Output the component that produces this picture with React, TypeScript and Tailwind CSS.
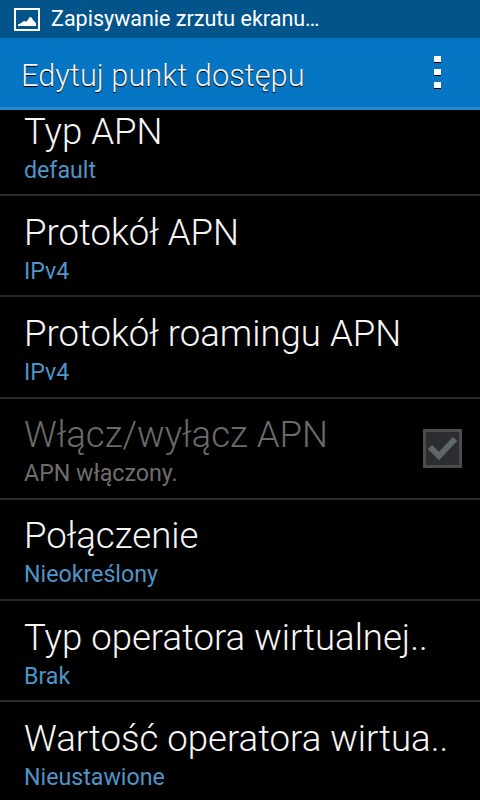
import React from 'react';

const rows = [
  { title: 'Protokół APN', sub: 'IPv4' },
  { title: 'Protokół roamingu APN', sub: 'IPv4' },
  { title: 'Włącz/wyłącz APN', sub: 'APN włączony.', disabled: true },
  { title: 'Połączenie', sub: 'Nieokreślony' },
  { title: 'Typ operatora wirtualnej..', sub: 'Brak' },
  { title: 'Wartość operatora wirtua..', sub: 'Nieustawione' },
];

const PictureIcon = () => (
  <svg width="26" height="23" viewBox="0 0 26 23" className="shrink-0">
    <rect x="1" y="1" width="24" height="21" fill="none" stroke="#fff" strokeWidth="2" />
    <path d="M4 18 L4 16.5 Q7 15.5 9 13.5 Q10.5 12.5 12 14 Q14 12 15.5 9.5 Q16.5 8.5 17.5 9.5 Q19.5 13 22 15 L22 18 Z" fill="#fff" />
  </svg>
);

const App: React.FC = () => {
  return (
    <div className="w-[480px] h-[800px] bg-black overflow-hidden flex flex-col font-['Roboto',sans-serif]">
      <div className="h-[38px] bg-[#04548c] flex items-center pl-[14px] gap-[11px] shrink-0">
        <PictureIcon />
        <span className="text-white text-[21.5px] leading-none">Zapisywanie zrzutu ekranu…</span>
      </div>
      <div className="h-[72px] bg-[#0676c4] border-b-[3px] border-[#2a86cc] flex items-center justify-between pl-[21px] pr-[39px] shrink-0">
        <span className="text-[#f4f4f4] text-[30.8px] font-light leading-none pt-[7px] [text-shadow:0_1px_1px_#000]">Edytuj punkt dostępu</span>
        <div className="flex flex-col gap-[6px]">
          <div className="w-[7px] h-[6px] bg-white border-b border-black box-content" />
          <div className="w-[7px] h-[6px] bg-white border-b border-black box-content" />
          <div className="w-[7px] h-[6px] bg-white border-b border-black box-content" />
        </div>
      </div>
      <div className="flex-1 overflow-hidden flex flex-col">
        <div className="h-[86px] shrink-0 border-b-2 border-[#2a2a2a] pl-[24px] flex flex-col justify-end pb-[10px]">
          <div className="text-[#f6f6f6] text-[36.6px] font-light leading-[40px]">Typ APN</div>
          <div className="text-[#4f94c8] text-[23.2px] leading-[28px] mt-[4px]">default</div>
        </div>
        {rows.map((row) => (
          <div key={row.title} className="h-[101.25px] shrink-0 border-b-2 border-[#2a2a2a] pl-[24px] pr-[18px] flex items-center justify-between">
            <div className="flex flex-col min-w-0 pt-[6px]">
              <div className={`text-[36.6px] font-light leading-[40px] whitespace-nowrap ${row.disabled ? 'text-[#6a6a6a]' : 'text-[#f6f6f6]'}`}>{row.title}</div>
              <div className={`text-[23.2px] leading-[28px] mt-[4px] ${row.disabled ? 'text-[#6e6e6e]' : 'text-[#4f94c8]'}`}>{row.sub}</div>
            </div>
            {row.disabled && (
              <div className="w-[39px] h-[39px] shrink-0 bg-[#2b2d30] border-[3px] border-[#4a4c4e] flex items-center justify-center">
                <svg width="31" height="26" viewBox="0 0 31 26">
                  <path d="M3 12 L12 21 L28 4" fill="none" stroke="#5f6669" strokeWidth="6" />
                </svg>
              </div>
            )}
          </div>
        ))}
      </div>
    </div>
  );
};

export default App;
